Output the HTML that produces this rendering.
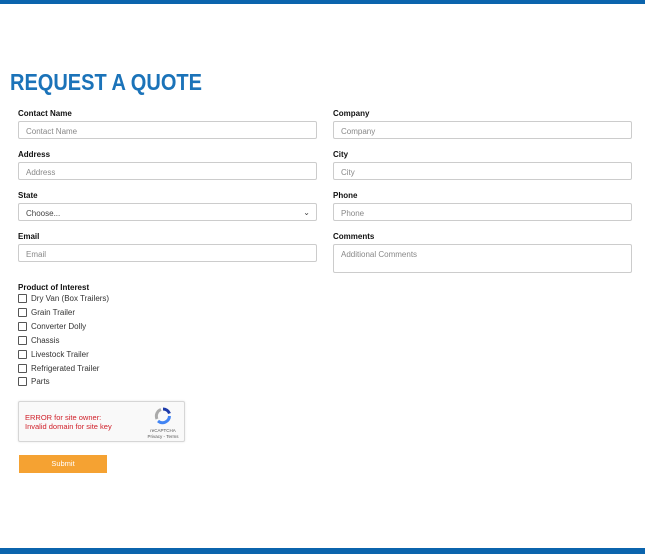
<!DOCTYPE html><html><head><style>
body{margin:0;width:645px;height:554px;position:relative;background:#fff;font-family:"Liberation Sans",Arial,sans-serif;overflow:hidden}
.bar{position:absolute;left:0;width:645px;background:#0b64ad}
.a{position:absolute}
.lb{position:absolute;font-size:8px;font-weight:bold;color:#111}
.in{position:absolute;width:297px;height:18px;border:1px solid #ccc;border-radius:2px;box-sizing:border-box;font-size:8px;color:#888;padding:5px 0 0 7px}
.cb{position:absolute;left:18px;font-size:8px;color:#333}
.cb i{display:inline-block;width:7px;height:7px;border:1px solid #555;border-radius:1px;vertical-align:-2px;margin-right:4px}
</style></head><body>
<div class="bar" style="top:0;height:4px"></div>
<div class="bar" style="top:548px;height:6px"></div>
<div class="a" style="left:10px;top:69px;font-size:23px;font-weight:bold;color:#1b73b9;transform:scaleX(0.87);transform-origin:0 0">REQUEST A QUOTE</div>
<div class="lb" style="left:18px;top:109px">Contact Name</div>
<div class="in" style="left:18px;top:121px;width:299px">Contact Name</div>
<div class="lb" style="left:18px;top:150px">Address</div>
<div class="in" style="left:18px;top:162px;width:299px">Address</div>
<div class="lb" style="left:18px;top:191px">State</div>
<div class="in" style="left:18px;top:203px;width:299px;color:#444">Choose...<span style="position:absolute;right:6px;top:4px;font-size:8px">&#8964;</span></div>
<div class="lb" style="left:18px;top:232px">Email</div>
<div class="in" style="left:18px;top:244px;width:299px">Email</div>
<div class="lb" style="left:333px;top:109px">Company</div>
<div class="in" style="left:333px;top:121px;width:299px">Company</div>
<div class="lb" style="left:333px;top:150px">City</div>
<div class="in" style="left:333px;top:162px;width:299px">City</div>
<div class="lb" style="left:333px;top:191px">Phone</div>
<div class="in" style="left:333px;top:203px;width:299px">Phone</div>
<div class="lb" style="left:333px;top:232px">Comments</div>
<div class="in" style="left:333px;top:244px;width:299px;height:29px">Additional Comments</div>
<div class="lb" style="left:18px;top:283px">Product of Interest</div>
<div class="cb" style="top:294px"><i></i>Dry Van (Box Trailers)</div>
<div class="cb" style="top:308px"><i></i>Grain Trailer</div>
<div class="cb" style="top:322px"><i></i>Converter Dolly</div>
<div class="cb" style="top:336px"><i></i>Chassis</div>
<div class="cb" style="top:350px"><i></i>Livestock Trailer</div>
<div class="cb" style="top:364px"><i></i>Refrigerated Trailer</div>
<div class="cb" style="top:377px"><i></i>Parts</div>
<div class="a" style="left:18px;top:401px;width:167px;height:41px;border:1px solid #d6d6d6;border-radius:2px;box-sizing:border-box;background:#f9f9f9;box-shadow:0 0 2px rgba(0,0,0,.1)">
<div class="a" style="left:6px;top:11px;font-size:7.5px;color:#d0202a;line-height:9px">ERROR for site owner:<br>Invalid domain for site key</div>
<svg class="a" style="left:135px;top:5px" width="18" height="18" viewBox="0 0 18 18"><path d="M9 2a7 7 0 0 1 6.5 4.5" stroke="#1c3aa9" stroke-width="3" fill="none"/><path d="M15.5 9A7 7 0 0 1 4 14" stroke="#4285f4" stroke-width="3" fill="none"/><path d="M3 12A7 7 0 0 1 7 2.5" stroke="#aaa" stroke-width="3" fill="none"/></svg>
<div class="a" style="left:128px;top:26px;font-size:4.5px;color:#555;line-height:6px;text-align:center;width:32px">reCAPTCHA<br>Privacy - Terms</div>
</div>
<div class="a" style="left:19px;top:455px;width:88px;height:18px;background:#f5a232;color:#fff;font-size:7.5px;text-align:center;line-height:18px">Submit</div>
</body></html>
